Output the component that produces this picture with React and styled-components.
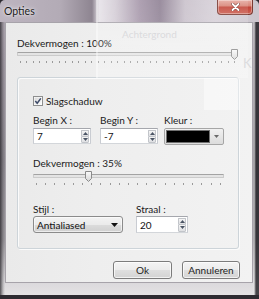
import React from 'react';
import styled, { createGlobalStyle } from 'styled-components';

const Global = createGlobalStyle`
  html, body { margin: 0; padding: 0; background: #2e2b31; }
  body { width: 259px; height: 299px; overflow: hidden; font-family: Lato, "Liberation Sans", sans-serif; }
  #root { width: 259px; height: 299px; }
`;

const Window = styled.div`
  position: relative;
  width: 259px;
  height: 295px;
  box-sizing: border-box;
  padding: 0 6px 12px 5px;
  display: flex;
  flex-direction: column;
  border-radius: 5px 5px 0 0;
  background:
    linear-gradient(90deg, #bdb5c0 0, #b3abb6 60px, #8e8591 92px, #e6e2e8 99px, #d4cdd6 115px, #a596a9 140px, #8f8194 160px, #c9c1cb 185px, #d6d0d8 215px, #cbc5cd 259px) 0 0 / 100% 22px no-repeat,
    linear-gradient(90deg, rgba(35,33,38,.75) 0, rgba(35,33,38,.2) 3px, rgba(0,0,0,0) 5px, rgba(0,0,0,0) 253px, rgba(230,230,230,.6) 254px, rgba(30,28,33,.8) 256px),
    linear-gradient(180deg, #b7afb9 0, #a39ca6 60px, #8e8a91 160px, #9d9a9f 240px, #dcdadd 284px, #e4e2e4 295px);
`;

const TitleBar = styled.div`
  height: 22px;
  flex-shrink: 0;
  display: flex;
  align-items: flex-start;
`;

const Title = styled.span`
  margin: 5px 0 0 -1px;
  font-size: 10.5px;
  line-height: 13px;
  color: #1b1b1b;
  text-shadow: 0 0 5px rgba(255, 255, 255, 0.85), 0 0 2px rgba(255, 255, 255, 0.7);
`;

const CloseButton = styled.div`
  margin-left: auto;
  width: 36px;
  height: 15px;
  box-sizing: border-box;
  border: 1px solid #7b3a32;
  border-top: none;
  border-radius: 0 0 4px 4px;
  background: linear-gradient(180deg, #e7aca3 0, #d9877a 40%, #c3463a 52%, #cc5e50 100%);
  box-shadow: inset 0 0 0 1px rgba(255, 255, 255, 0.35);
  display: flex;
  align-items: center;
  justify-content: center;
`;

const Client = styled.div`
  flex: 1;
  box-sizing: border-box;
  border: 1px solid #a7a3aa;
  background: linear-gradient(90deg, #eaeaea 0, #eeeeee 90px, #f2f2f2 100%);
  padding: 14px 12px 0 11px;
  display: flex;
  flex-direction: column;
`;

const Label = styled.div`
  font-size: 10px;
  line-height: 12px;
  height: 12px;
  color: #1a1a1a;
  white-space: nowrap;
  margin-top: ${(p) => p.$mt || 0}px;
`;

const SliderWrap = styled.div`
  position: relative;
  width: ${(p) => p.$w}px;
  height: 11px;
  margin-top: ${(p) => p.$mt || 0}px;
`;

const Track = styled.div`
  margin-top: 3px;
  height: 4px;
  box-sizing: border-box;
  border: 1px solid #cbcbcb;
  border-top-color: #a3a3a3;
  background: #e4e4e4;
  border-radius: 1px;
`;

const ThumbSvg = styled.svg`
  position: absolute;
  top: 0;
  display: block;
`;

const Ticks = styled.div`
  display: flex;
  justify-content: space-between;
  width: ${(p) => p.$w}px;
  height: 2px;
  margin: 1px 0 0 ${(p) => p.$inset}px;
`;

const Tick = styled.span`
  width: 1px;
  height: 2px;
  background: #9a9a9a;
`;

const Group = styled.div`
  margin-top: 14px;
  width: 222px;
  box-sizing: border-box;
  border: 1px solid #cdd4d9;
  border-radius: 3px;
  box-shadow: inset 1px 1px 0 #fbfbfb, 1px 1px 0 #fbfbfb;
  padding: 17px 0 15px 15px;
  display: flex;
  flex-direction: column;
`;

const CheckRow = styled.label`
  display: flex;
  align-items: center;
  gap: 3px;
  height: 12px;
  font-size: 10px;
  line-height: 12px;
  color: #1a1a1a;
`;

const FieldRow = styled.div`
  display: grid;
  grid-template-columns: ${(p) => p.$cols};
  margin-top: ${(p) => p.$mt || 0}px;
`;

const Field = styled.div`
  display: flex;
  flex-direction: column;
  gap: ${(p) => p.$gap ?? 2}px;
`;

const SpinBox = styled.div`
  width: ${(p) => p.$w}px;
  height: ${(p) => p.$h || 16}px;
  box-sizing: border-box;
  border: 1px solid #abadb3;
  border-color: #a5a7ad #c9ccd2 #d3d6da #c9ccd2;
  background: #fff;
  display: flex;
  align-items: center;
  justify-content: space-between;
  padding: 0 1px 0 3px;
  font-size: 10px;
  color: #111;
`;

const SpinButtons = styled.div`
  display: flex;
  flex-direction: column;
  height: ${(p) => p.$h || 13}px;
`;

const SpinHalf = styled.div`
  flex: 1;
  width: 8px;
  box-sizing: border-box;
  border: 1px solid #c2c5ca;
  background: linear-gradient(180deg, #f6f6f6, #dedfe2);
  display: flex;
  align-items: center;
  justify-content: center;
  &:first-child { border-bottom: none; border-radius: 1px 1px 0 0; }
  &:last-child { border-radius: 0 0 1px 1px; }
`;

const ColorBox = styled.div`
  width: 60px;
  height: 17px;
  box-sizing: border-box;
  border: 1px solid #a6a6a6;
  border-radius: 2px;
  background: linear-gradient(180deg, #f1f1f1, #dcdcdc);
  padding: 1px;
  display: flex;
  align-items: stretch;
`;

const Swatch = styled.div`
  width: 44px;
  box-sizing: border-box;
  border: 1px solid #707070;
  background: ${(p) => p.$color};
`;

const ArrowCell = styled.div`
  flex: 1;
  display: flex;
  align-items: center;
  justify-content: center;
`;

const Combo = styled.div`
  width: 90px;
  height: 17px;
  box-sizing: border-box;
  border: 1px solid #8b8b8b;
  border-radius: 3px;
  background: linear-gradient(180deg, #f3f3f3 0, #ebebeb 50%, #dcdcdc 51%, #d0d0d0 100%);
  box-shadow: inset 0 0 0 1px rgba(255, 255, 255, 0.6);
  display: flex;
  align-items: center;
  justify-content: space-between;
  padding: 0 4px 0 3px;
  font-size: 10px;
  color: #111;
`;

const ButtonRow = styled.div`
  display: flex;
  justify-content: flex-end;
  gap: 10px;
  margin-top: 12px;
`;

const Button = styled.button`
  width: ${(p) => p.$w}px;
  height: 18px;
  box-sizing: border-box;
  border: 1px solid #7c7c7c;
  border-radius: 3px;
  background: linear-gradient(180deg, #f4f4f4 0, #ececec 50%, #dfdfdf 51%, #d3d3d3 100%);
  box-shadow: inset 0 0 0 1px rgba(255, 255, 255, 0.7);
  font-family: inherit;
  font-size: 10px;
  color: #1e1e1e;
  padding: 0;
`;

const Ghost = styled.div`
  position: absolute;
  left: 96px;
  top: 0;
  width: 150px;
  height: 78px;
  pointer-events: none;
  border-left: 2px solid rgba(255, 255, 255, 0.35);
  background: linear-gradient(180deg, rgba(255, 255, 255, 0.1), rgba(255, 255, 255, 0.22));
`;

const GhostText = styled.span`
  position: absolute;
  left: ${(p) => p.$x}px;
  top: ${(p) => p.$y}px;
  font-size: ${(p) => p.$s || 10}px;
  color: rgba(195, 195, 200, 0.5);
  white-space: nowrap;
  pointer-events: none;
`;

const GhostBox = styled.div`
  position: absolute;
  left: 204px;
  top: 78px;
  width: 35px;
  height: 32px;
  background: rgba(255, 255, 255, 0.45);
  pointer-events: none;
`;

function Slider({ width, pos, ticks, mt }) {
  const thumbW = 7;
  const left = Math.round(pos * (width - thumbW));
  return (
    <>
      <SliderWrap $w={width} $mt={mt}>
        <Track />
        <ThumbSvg width="7" height="11" viewBox="0 0 7 11" style={{ left }}>
          <defs>
            <linearGradient id="thg" x1="0" y1="0" x2="0" y2="1">
              <stop offset="0" stopColor="#fafafa" />
              <stop offset="1" stopColor="#d6d6d6" />
            </linearGradient>
          </defs>
          <path d="M0.5 0.5 H6.5 V7.5 L3.5 10.5 L0.5 7.5 Z" fill="url(#thg)" stroke="#8a8a8a" />
        </ThumbSvg>
      </SliderWrap>
      <Ticks $w={width - 6} $inset={3}>
        {Array.from({ length: ticks }, (_, i) => (
          <Tick key={i} />
        ))}
      </Ticks>
    </>
  );
}

function Spin({ value, w, h }) {
  return (
    <SpinBox $w={w} $h={h}>
      <span>{value}</span>
      <SpinButtons $h={(h || 16) - 3}>
        <SpinHalf>
          <svg width="5" height="3" viewBox="0 0 5 3"><path d="M0 3 L2.5 0 L5 3 Z" fill="#4b5565" /></svg>
        </SpinHalf>
        <SpinHalf>
          <svg width="5" height="3" viewBox="0 0 5 3"><path d="M0 0 L2.5 3 L5 0 Z" fill="#4b5565" /></svg>
        </SpinHalf>
      </SpinButtons>
    </SpinBox>
  );
}

export default function App() {
  return (
    <>
      <Global />
      <Window>
        <TitleBar>
          <Title>Opties</Title>
          <CloseButton>
            <svg width="9" height="8" viewBox="0 0 9 8">
              <path d="M1.5 1 L7.5 7 M7.5 1 L1.5 7" stroke="#6e2a22" strokeWidth="3" strokeLinecap="round" />
              <path d="M1.5 1 L7.5 7 M7.5 1 L1.5 7" stroke="#ffffff" strokeWidth="1.8" strokeLinecap="round" />
            </svg>
          </CloseButton>
        </TitleBar>
        <Client>
          <Label>Dekvermogen : 100%</Label>
          <Slider width={221} pos={1} ticks={34} />
          <Group>
            <CheckRow>
              <svg width="10" height="10" viewBox="0 0 10 10">
                <defs>
                  <linearGradient id="cbg" x1="0" y1="0" x2="1" y2="1">
                    <stop offset="0" stopColor="#d9d9d9" />
                    <stop offset="1" stopColor="#fbfbfb" />
                  </linearGradient>
                </defs>
                <rect x="0.5" y="0.5" width="9" height="9" fill="#fff" stroke="#8e8f8f" />
                <rect x="1.5" y="1.5" width="7" height="7" fill="url(#cbg)" />
                <path d="M2.3 5 L4.2 7.2 L7.8 2.4" fill="none" stroke="#3d4a68" strokeWidth="1.5" />
              </svg>
              Slagschaduw
            </CheckRow>
            <FieldRow $cols="67px 64px 60px" $mt={7}>
              <Field>
                <Label>Begin X :</Label>
                <Spin value="7" w={58} />
              </Field>
              <Field>
                <Label>Begin Y :</Label>
                <Spin value="-7" w={58} />
              </Field>
              <Field>
                <Label>Kleur :</Label>
                <ColorBox>
                  <Swatch $color="#000" />
                  <ArrowCell>
                    <svg width="5" height="3" viewBox="0 0 5 3"><path d="M0 0 L2.5 3 L5 0 Z" fill="#6a6a6a" /></svg>
                  </ArrowCell>
                </ColorBox>
              </Field>
            </FieldRow>
            <Label $mt={12}>Dekvermogen : 35%</Label>
            <Slider width={191} pos={0.28} ticks={21} mt={2} />
            <FieldRow $cols="103px 60px" $mt={18}>
              <Field $gap={1}>
                <Label>Stijl :</Label>
                <Combo>
                  <span>Antialiased</span>
                  <svg width="7" height="4" viewBox="0 0 7 4"><path d="M0 0 L3.5 4 L7 0 Z" fill="#111" /></svg>
                </Combo>
              </Field>
              <Field $gap={1}>
                <Label>Straal :</Label>
                <Spin value="20" w={52} h={17} />
              </Field>
            </FieldRow>
          </Group>
          <ButtonRow>
            <Button $w={59}>Ok</Button>
            <Button $w={58}>Annuleren</Button>
          </ButtonRow>
        </Client>
        <Ghost />
        <GhostText $x={122} $y={28} $s={10}>Achtergrond</GhostText>
        <GhostText $x={243} $y={55} $s={13}>K</GhostText>
        <GhostBox />
      </Window>
    </>
  );
}
